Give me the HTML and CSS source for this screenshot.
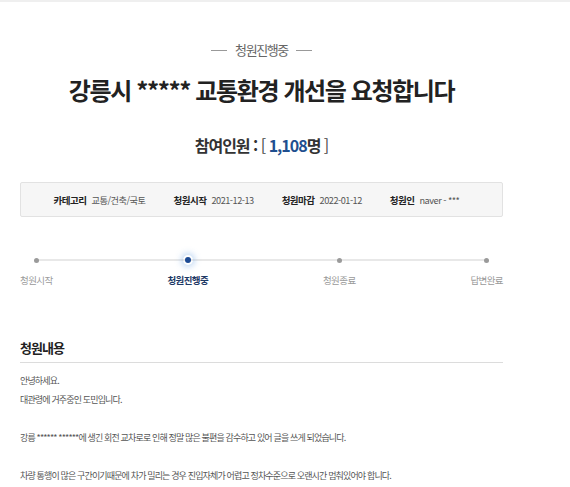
FILE: index.html
```html
<!DOCTYPE html>
<html lang="ko">
<head>
    <meta charset="UTF-8">
    <meta name="viewport" content="width=device-width, initial-scale=1.0">
    <title>청원진행중</title>
    <link rel="stylesheet" href="styles.css">
</head>
<body>
  <div class="page">
    <div class="status"><span class="dash"></span>청원진행중<span class="dash"></span></div>
    <h1 class="title">강릉시 ***** 교통환경 개선을 요청합니다</h1>
    <div class="count">참여인원 : <span class="br">[</span> <span class="num">1,108</span>명 <span class="br">]</span></div>

    <ul class="info">
      <li><b>카테고리</b>교통/건축/국토</li>
      <li><b>청원시작</b>2021-12-13</li>
      <li><b>청원마감</b>2022-01-12</li>
      <li><b>청원인</b>naver - ***</li>
    </ul>

    <ol class="steps">
      <li class="step"><i class="dot"></i><span>청원시작</span></li>
      <li class="step on"><i class="dot"></i><span>청원진행중</span></li>
      <li class="step"><i class="dot"></i><span>청원종료</span></li>
      <li class="step"><i class="dot"></i><span>답변완료</span></li>
    </ol>

    <h2 class="sec-title">청원내용</h2>
    <div class="content">
      <p>안녕하세요.<br>대관령에 거주중인 도민입니다.</p>
      <p>강릉 ****** ******에 생긴 회전 교차로로 인해 정말 많은 불편을 감수하고 있어 글을 쓰게 되었습니다.</p>
      <p>차량 통행이 많은 구간이기때문에 차가 밀리는 경우 진입자체가 어렵고 정차수준으로 오랜시간 멈춰있어야 합니다.</p>
    </div>
  </div>
</body>
</html>
```

FILE: styles.css
```css
* {
  margin: 0;
  padding: 0;
  box-sizing: border-box;
}
body {
  background: #fff;
  border-top: 2px solid #efefef;
  font-family: "Noto Sans CJK KR", "Noto Sans", sans-serif;
  color: #333;
}
.page {
  width: 483px;
  margin-left: 20px;
  padding-top: 40px;
}
.status {
  display: flex;
  justify-content: center;
  align-items: center;
  gap: 8px;
  font-size: 13px;
  line-height: 16px;
  letter-spacing: -1.4px;
  color: #666;
}
.dash {
  width: 16px;
  height: 1px;
  background: #999;
}
.title {
  margin-top: 17px;
  text-align: center;
  font-size: 24px;
  line-height: 30px;
  letter-spacing: -1.4px;
  font-weight: 700;
  color: #222;
}
.count {
  margin-top: 29px;
  text-align: center;
  font-size: 16px;
  line-height: 22px;
  letter-spacing: -1px;
  font-weight: 700;
  color: #333;
}
.count .br {
  font-weight: 400;
  color: #444;
}
.count .num {
  color: #1f4f8f;
}
.info {
  list-style: none;
  margin-top: 26px;
  height: 35px;
  display: flex;
  justify-content: center;
  align-items: center;
  gap: 28px;
  padding-right: 10px;
  background: #f6f6f6;
  border: 1px solid #e2e2e2;
  border-radius: 2px;
  font-size: 9.2px;
  letter-spacing: -0.5px;
  color: #555;
}
.info b {
  font-size: 9.5px;
  color: #222;
  margin-right: 5px;
}
.steps {
  list-style: none;
  margin-top: 38px;
  display: flex;
  justify-content: space-between;
  position: relative;
}
.steps::before {
  content: "";
  position: absolute;
  left: 16px;
  right: 16px;
  top: 4px;
  height: 2px;
  background: #e8e8e8;
}
.step {
  display: flex;
  flex-direction: column;
  align-items: center;
  gap: 8px;
  position: relative;
}
.dot {
  width: 10px;
  height: 10px;
  display: flex;
  align-items: center;
  justify-content: center;
}
.dot::after {
  content: "";
  width: 5px;
  height: 5px;
  border-radius: 50%;
  background: #9a9a9a;
}
.step.on .dot {
  border-radius: 50%;
  box-shadow: 0 0 6px 2px rgba(120, 170, 230, 0.45);
}
.step.on .dot::after {
  width: 6px;
  height: 6px;
  background: #1d4b95;
}
.step span {
  font-size: 9.5px;
  line-height: 14px;
  letter-spacing: -0.6px;
  color: #9a9a9a;
}
.step.on span {
  color: #1f3a66;
  font-weight: 700;
}
.sec-title {
  margin-top: 51px;
  padding-bottom: 4px;
  border-bottom: 1px solid #dcdcdc;
  font-size: 13px;
  line-height: 20px;
  letter-spacing: -1px;
  font-weight: 700;
  color: #222;
}
.content {
  margin-top: 8px;
  font-size: 9px;
  line-height: 19px;
  letter-spacing: -0.85px;
  color: #555;
}
.content p {
  margin-bottom: 19px;
}
```
